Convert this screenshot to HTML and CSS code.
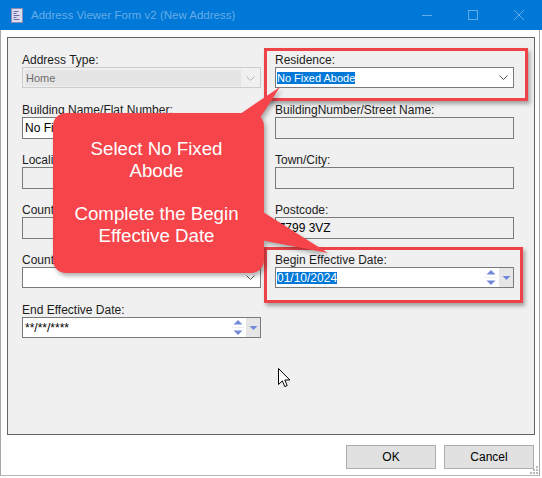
FILE: index.html
```html
<!DOCTYPE html>
<html>
<head>
<meta charset="utf-8">
<title>Address Viewer Form v2</title>
<link rel="stylesheet" href="styles.css">
</head>
<body>
<div class="window">
  <div class="titlebar">
    <svg class="app-icon" width="12" height="15" viewBox="0 0 12 15">
      <rect x="0.5" y="0.5" width="11" height="14" fill="#dcdcee" stroke="#8c8cb6"/>
      <path d="M2.5 3.5h5M2.5 5.5h3M2.5 7.5h6M2.5 9.5h3M2.5 11.5h6" stroke="#6c6ca8" stroke-width="1"/>
    </svg>
    <span class="title">Address Viewer Form v2 (New Address)</span>
    <div class="controls">
      <div class="cap-btn"><svg width="10" height="10" viewBox="0 0 10 10"><path d="M0 5.5h10" stroke="#66ace8" stroke-width="1"/></svg></div>
      <div class="cap-btn"><svg width="10" height="10" viewBox="0 0 10 10"><rect x="0.5" y="0.5" width="9" height="9" fill="none" stroke="#66ace8" stroke-width="1"/></svg></div>
      <div class="cap-btn"><svg width="10" height="10" viewBox="0 0 10 10"><path d="M0 0L10 10M10 0L0 10" stroke="#66ace8" stroke-width="1"/></svg></div>
    </div>
  </div>

  <div class="client">
    <div class="panel">
      <!-- left column -->
      <div class="field">
        <div class="label">Address Type:</div>
        <div class="combo combo-disabled">
          <span class="combo-inner">Home</span>
          <svg class="chev" width="9" height="5" viewBox="0 0 9 5"><path d="M0.5 0.5L4.5 4.5L8.5 0.5" fill="none" stroke="#b4b4b4"/></svg>
        </div>
      </div>
      <div class="field">
        <div class="label">Building Name/Flat Number:</div>
        <div class="box"><span class="val">No Fixed Abode</span></div>
      </div>
      <div class="field">
        <div class="label">Locality:</div>
        <div class="box disabled"></div>
      </div>
      <div class="field">
        <div class="label">County:</div>
        <div class="box disabled"></div>
      </div>
      <div class="field">
        <div class="label">Country:</div>
        <div class="combo">
          <span class="combo-val"></span>
          <svg class="chev" width="9" height="5" viewBox="0 0 9 5"><path d="M0.5 0.5L4.5 4.5L8.5 0.5" fill="none" stroke="#555"/></svg>
        </div>
      </div>
      <div class="field">
        <div class="label">End Effective Date:</div>
        <div class="date">
          <span class="date-val">**/**/****</span>
          <svg class="spin" width="14" height="19" viewBox="0 0 14 19">
            <path d="M1 9.5h12" stroke="#ececec"/>
            <polygon points="2.5,6.5 7,2 11.5,6.5" fill="#7289d8"/>
            <polygon points="2.5,12.5 11.5,12.5 7,17" fill="#7289d8"/>
          </svg>
          <div class="dd"><svg width="9" height="4" viewBox="0 0 9 4"><polygon points="0.5,0 8.5,0 4.5,4" fill="#7289d8"/></svg></div>
        </div>
      </div>

      <!-- right column -->
      <div class="field">
        <div class="label">Residence:</div>
        <div class="combo">
          <span class="combo-val"><span class="sel sel-small">No Fixed Abode</span></span>
          <svg class="chev" width="9" height="5" viewBox="0 0 9 5"><path d="M0.5 0.5L4.5 4.5L8.5 0.5" fill="none" stroke="#555"/></svg>
        </div>
      </div>
      <div class="field">
        <div class="label">BuildingNumber/Street Name:</div>
        <div class="box disabled"></div>
      </div>
      <div class="field">
        <div class="label">Town/City:</div>
        <div class="box disabled"></div>
      </div>
      <div class="field">
        <div class="label">Postcode:</div>
        <div class="box disabled"><span class="val">Z799 3VZ</span></div>
      </div>
      <div class="field">
        <div class="label">Begin Effective Date:</div>
        <div class="date">
          <span class="date-val"><span class="sel">01/10/2024</span></span>
          <svg class="spin" width="14" height="19" viewBox="0 0 14 19">
            <path d="M1 9.5h12" stroke="#ececec"/>
            <polygon points="2.5,6.5 7,2 11.5,6.5" fill="#7289d8"/>
            <polygon points="2.5,12.5 11.5,12.5 7,17" fill="#7289d8"/>
          </svg>
          <div class="dd"><svg width="9" height="4" viewBox="0 0 9 4"><polygon points="0.5,0 8.5,0 4.5,4" fill="#7289d8"/></svg></div>
        </div>
      </div>
    </div>

    <div class="buttons">
      <button class="btn">OK</button>
      <button class="btn">Cancel</button>
    </div>

    <svg class="grip" width="9" height="9" viewBox="0 0 9 9">
      <rect x="6" y="0" width="2" height="2" fill="#b8b8b8"/>
      <rect x="3" y="3" width="2" height="2" fill="#b8b8b8"/>
      <rect x="6" y="3" width="2" height="2" fill="#b8b8b8"/>
      <rect x="0" y="6" width="2" height="2" fill="#b8b8b8"/>
      <rect x="3" y="6" width="2" height="2" fill="#b8b8b8"/>
      <rect x="6" y="6" width="2" height="2" fill="#b8b8b8"/>
    </svg>
  </div>

  <!-- annotation overlays -->
  <div class="hl hl-residence"></div>
  <div class="hl hl-begin"></div>

  <svg class="callout" width="542" height="478" viewBox="0 0 542 478">
    <path d="M66 113H251A13 13 0 0 1 264 126V260A13 13 0 0 1 251 273H66A13 13 0 0 1 53 260V126A13 13 0 0 1 66 113Z" fill="#f5454b"/>
    <polygon points="236,116.7 280,87 254,127.3" fill="#f5454b"/>
    <polygon points="250,203.7 328,253 250,238.1" fill="#f5454b"/>
  </svg>
  <div class="callout-text">Select No Fixed<br>Abode<br><br>Complete the Begin<br>Effective Date</div>

  <svg class="cursor" width="13" height="20" viewBox="0 0 13 20">
    <path d="M0.5 0.5L0.5 16.5L4.3 12.9L6.8 18.6L9.2 17.6L6.8 12L11.8 12Z" fill="#fff" stroke="#000" stroke-width="1" stroke-linejoin="round"/>
  </svg>
</div>
</body>
</html>
```

FILE: styles.css
```css
* {
  box-sizing: border-box;
}

html,
body {
  margin: 0;
  padding: 0;
}

body {
  width: 542px;
  height: 478px;
  overflow: hidden;
  background: #ffffff;
  font-family: "Liberation Sans", Arial, sans-serif;
}

.window {
  position: relative;
  width: 542px;
  height: 478px;
  background: #ffffff;
}

/* ---------- title bar ---------- */
.titlebar {
  height: 30px;
  background: #0078d7;
  display: flex;
  align-items: center;
}

.app-icon {
  display: block;
  margin-left: 11px;
  flex: none;
}

.title {
  margin-left: 8px;
  font-size: 11.5px;
  color: #66ace8;
  white-space: nowrap;
}

.controls {
  margin-left: auto;
  display: flex;
  height: 30px;
}

.cap-btn {
  width: 46px;
  height: 30px;
  display: flex;
  align-items: center;
  justify-content: center;
}

.cap-btn svg {
  display: block;
}

/* ---------- client area ---------- */
.client {
  position: relative;
  width: 540px;
  height: 446px;
  border-left: 1px solid #a7a7a7;
  border-right: 1px solid #a7a7a7;
  border-bottom: 1px solid #b5b5b5;
  padding: 7px 5px 0 6px;
  background: #ffffff;
}

.panel {
  width: 528px;
  height: 398px;
  border: 1px solid #646464;
  background: #f0f0f0;
  padding: 15px 0 0 14px;
  display: grid;
  grid-template-columns: 239px 239px;
  grid-template-rows: repeat(6, 50px);
  grid-auto-flow: column;
  column-gap: 14px;
  align-content: start;
}

.field {
  display: flex;
  flex-direction: column;
}

.label {
  height: 14px;
  line-height: 14px;
  font-size: 12px;
  color: #1c1c1c;
  white-space: nowrap;
}

/* text boxes */
.box {
  height: 22px;
  border: 1px solid #7a7a7a;
  background: #ffffff;
  display: flex;
  align-items: center;
  padding-left: 2px;
  font-size: 12px;
  color: #000;
  white-space: nowrap;
  overflow: hidden;
}

.box.disabled {
  background: #f0f0f0;
}

/* combo boxes */
.combo {
  height: 21px;
  border: 1px solid #7a7a7a;
  background: #ffffff;
  display: flex;
  align-items: center;
  padding-left: 1px;
  font-size: 11px;
  color: #000;
}

.combo-val {
  flex: 1;
  display: flex;
  align-items: center;
  white-space: nowrap;
}

.combo-disabled {
  border-color: #cccccc;
  background: #f0f0f0;
  padding: 2px 0 1px 2px;
  align-items: stretch;
}

.combo-inner {
  width: 216px;
  background: #e5e5e5;
  color: #6d6d6d;
  padding-left: 1px;
  display: flex;
  align-items: center;
  white-space: nowrap;
}

.chev {
  display: block;
  flex: none;
  margin-left: auto;
  margin-right: 5px;
  align-self: center;
}

.sel {
  display: inline-block;
  height: 12px;
  line-height: 12px;
  background: #0078d7;
  color: #ffffff;
}

.sel-small {
  font-size: 11px;
}

/* date pickers */
.date {
  height: 21px;
  border: 1px solid #7a7a7a;
  background: #ffffff;
  display: flex;
  align-items: center;
  padding-left: 1px;
  font-size: 12px;
  color: #000;
}

.date-val {
  flex: 1;
  display: flex;
  align-items: center;
  white-space: nowrap;
  padding-left: 1px;
}

.date-val .sel {
  margin-left: -1px;
}

.spin {
  display: block;
  flex: none;
}

.dd {
  width: 14px;
  height: 19px;
  margin-left: 1px;
  background: #e6e6e6;
  display: flex;
  align-items: center;
  justify-content: center;
  flex: none;
}

.dd svg {
  display: block;
}

/* buttons */
.buttons {
  display: flex;
  justify-content: flex-end;
  gap: 8px;
  margin-top: 10px;
}

.btn {
  width: 90px;
  height: 24px;
  border: 1px solid #adadad;
  background: #e1e1e1;
  font-family: "Liberation Sans", Arial, sans-serif;
  font-size: 12px;
  color: #000;
  padding: 0;
  margin: 0;
}

.grip {
  position: absolute;
  right: 0;
  bottom: 0;
  display: block;
}

/* ---------- annotations ---------- */
.hl {
  position: absolute;
  border: 3px solid #ef434a;
  box-shadow: 2px 3px 4px rgba(0, 0, 0, 0.32);
}

.hl-residence {
  left: 264px;
  top: 48px;
  width: 264px;
  height: 53px;
}

.hl-begin {
  left: 264px;
  top: 247px;
  width: 259px;
  height: 56px;
}

.callout {
  position: absolute;
  left: 0;
  top: 0;
  display: block;
  pointer-events: none;
  filter: drop-shadow(2px 3px 2px rgba(0, 0, 0, 0.3));
}

.callout-text {
  position: absolute;
  left: 53px;
  top: 138px;
  width: 207px;
  color: #ffffff;
  font-size: 18.7px;
  line-height: 21.7px;
  text-align: center;
  white-space: nowrap;
}

.cursor {
  position: absolute;
  left: 278px;
  top: 368px;
  display: block;
}
```
